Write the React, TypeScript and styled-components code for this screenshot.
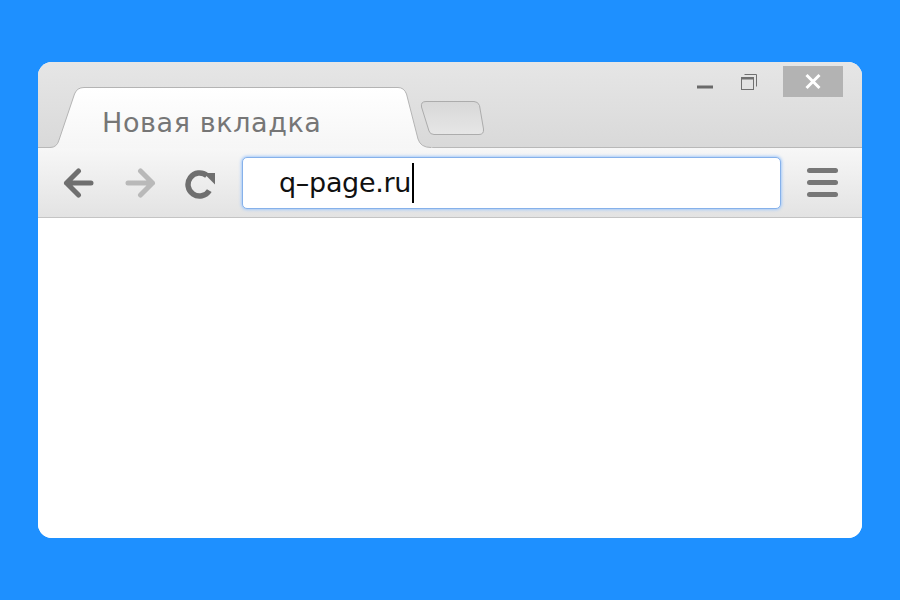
import styled, { createGlobalStyle } from "styled-components"

const GlobalStyle = createGlobalStyle`
  html, body {
    margin: 0;
    padding: 0;
    background: #1e90ff;
  }
  #root {
    width: 900px;
    height: 600px;
  }
`

const Page = styled.div`
  width: 900px;
  height: 600px;
  display: flex;
  align-items: center;
  justify-content: center;
`

const BrowserWindow = styled.div`
  width: 824px;
  height: 476px;
  border-radius: 14px;
  overflow: hidden;
  background: #ffffff;
  display: flex;
  flex-direction: column;
`

const TitleBar = styled.div`
  height: 86px;
  box-sizing: border-box;
  display: flex;
  align-items: flex-end;
  padding-left: 12px;
  background: linear-gradient(#e6e6e6, #d9d9d9);
  border-bottom: 1px solid #b8b8b8;
`

const Tab = styled.div`
  position: relative;
  width: 383px;
  height: 61px;
  margin-bottom: -1px;
  box-sizing: border-box;
  padding: 19px 0 0 52px;
  z-index: 1;
`

const TabShape = styled.svg`
  position: absolute;
  left: 0;
  top: 0;
  z-index: -1;
`

const TabTitle = styled.span`
  font-family: "DejaVu Sans", sans-serif;
  font-size: 27px;
  line-height: 34px;
  letter-spacing: 0.6px;
  color: #767676;
`

const NewTabButton = styled.svg`
  margin: 0 0 10px -14px;
  flex-shrink: 0;
`

const WindowControls = styled.div`
  align-self: flex-start;
  margin: 4px 19px 0 auto;
  display: flex;
`

const ControlButton = styled.div<{ $wide?: boolean; $gapAfter?: number }>`
  width: ${(p) => (p.$wide ? 60 : 43)}px;
  height: 31px;
  margin-right: ${(p) => p.$gapAfter ?? 0}px;
  background: ${(p) => (p.$wide ? "#b3b3b3" : "transparent")};
  display: flex;
`

const Toolbar = styled.div`
  height: 70px;
  box-sizing: border-box;
  display: flex;
  align-items: center;
  padding: 0 10px;
  background: linear-gradient(#f7f7f7, #e3e3e3);
  border-bottom: 1px solid #c4c4c4;
`

const NavButton = styled.div`
  width: 61px;
  height: 44px;
  display: flex;
  align-items: center;
  justify-content: center;
  flex-shrink: 0;
`

const AddressBar = styled.div`
  flex: 1;
  height: 52px;
  margin: 0 0 0 11px;
  box-sizing: border-box;
  border: 1px solid #86b1ea;
  border-radius: 5px;
  box-shadow: 0 0 3px 1px #a6cbfa;
  background: #ffffff;
  display: flex;
  align-items: center;
  padding-left: 36px;
`

const Url = styled.span`
  font-family: "DejaVu Sans", sans-serif;
  font-size: 27px;
  letter-spacing: -0.3px;
  color: #111111;
`

const Caret = styled.span`
  width: 2px;
  height: 40px;
  background: #000000;
  margin-left: 1px;
`

const MenuButton = styled.div`
  width: 60px;
  margin-left: 11px;
  display: flex;
  flex-direction: column;
  align-items: center;
  gap: 7px;
`

const MenuBar = styled.span`
  width: 31px;
  height: 5px;
  border-radius: 3px;
  background: #777777;
`

const Content = styled.div`
  flex: 1;
  background: #ffffff;
`

const Arrow = ({ color, flip }: { color: string; flip?: boolean }) => (
  <svg width="32" height="32" viewBox="0 0 32 32" style={flip ? { transform: "scaleX(-1)" } : undefined}>
    <path
      d="M3.5 16 H28 M15.5 4 L3.5 16 L15.5 28"
      fill="none"
      stroke={color}
      strokeWidth="5"
      strokeLinecap="round"
      strokeLinejoin="round"
    />
  </svg>
)

const Reload = () => (
  <svg width="32" height="32" viewBox="0 0 32 32">
    <path
      d="M24.3 23.6 A11.5 11.5 0 1 1 21.9 8.7"
      fill="none"
      stroke="#6f6f6f"
      strokeWidth="5.5"
    />
    <polygon points="18.5,6 30,6 30,17.5" fill="#6f6f6f" />
  </svg>
)

export default function App() {
  return (
    <>
      <GlobalStyle />
      <Page>
        <BrowserWindow>
          <TitleBar>
            <Tab>
              <TabShape width="383" height="61" viewBox="0 0 383 61">
                <defs>
                  <linearGradient id="tabFill" x1="0" y1="0" x2="0" y2="1">
                    <stop offset="0" stopColor="#ffffff" />
                    <stop offset="1" stopColor="#f6f6f6" />
                  </linearGradient>
                </defs>
                <path
                  d="M0 60.5 Q7 60.5 9 53 L24.5 7 Q27 0.5 34 0.5 L348 0.5 Q354 0.5 356.5 7 L368 52 Q370.5 60.5 381 60.5 L383 61 L0 61 Z"
                  fill="url(#tabFill)"
                />
                <path
                  d="M0 60.5 Q7 60.5 9 53 L24.5 7 Q27 0.5 34 0.5 L348 0.5 Q354 0.5 356.5 7 L368 52 Q370.5 60.5 381 60.5"
                  fill="none"
                  stroke="#b4b4b4"
                  strokeWidth="1"
                />
              </TabShape>
              <TabTitle>Новая вкладка</TabTitle>
            </Tab>
            <NewTabButton width="66" height="37" viewBox="0 0 66 37">
              <defs>
                <linearGradient id="newTabFill" x1="0" y1="0" x2="0" y2="1">
                  <stop offset="0" stopColor="#d8d8d8" />
                  <stop offset="1" stopColor="#e6e6e6" />
                </linearGradient>
              </defs>
              <path
                d="M7 1.5 L55 1.5 Q59 1.5 60.5 5.5 L64.5 29 Q65 34.5 60 34.5 L15 34.5 Q11 34.5 10 31 L2.5 7 Q1.5 1.5 7 1.5 Z"
                fill="url(#newTabFill)"
                stroke="#acacac"
                strokeWidth="1"
              />
            </NewTabButton>
            <WindowControls>
              <ControlButton>
                <svg width="43" height="31" viewBox="0 0 43 31">
                  <rect x="14" y="19.5" width="16" height="3" fill="#6a6a6a" />
                </svg>
              </ControlButton>
              <ControlButton $gapAfter={14}>
                <svg width="43" height="31" viewBox="0 0 43 31">
                  <path d="M18.5 8.5 H30.5 V20.5" fill="none" stroke="#707070" strokeWidth="1" />
                  <rect x="15.5" y="11.5" width="12" height="12" fill="none" stroke="#707070" strokeWidth="1" />
                  <rect x="15" y="11" width="13" height="2.5" fill="#707070" />
                </svg>
              </ControlButton>
              <ControlButton $wide>
                <svg width="60" height="31" viewBox="0 0 60 31">
                  <path d="M23.5 9 L36.5 22 M36.5 9 L23.5 22" stroke="#ffffff" strokeWidth="3" />
                </svg>
              </ControlButton>
            </WindowControls>
          </TitleBar>
          <Toolbar>
            <NavButton>
              <Arrow color="#6f6f6f" />
            </NavButton>
            <NavButton>
              <Arrow color="#b9b9b9" flip />
            </NavButton>
            <NavButton>
              <Reload />
            </NavButton>
            <AddressBar>
              <Url>q–page.ru</Url>
              <Caret />
            </AddressBar>
            <MenuButton>
              <MenuBar />
              <MenuBar />
              <MenuBar />
            </MenuButton>
          </Toolbar>
          <Content />
        </BrowserWindow>
      </Page>
    </>
  )
}
